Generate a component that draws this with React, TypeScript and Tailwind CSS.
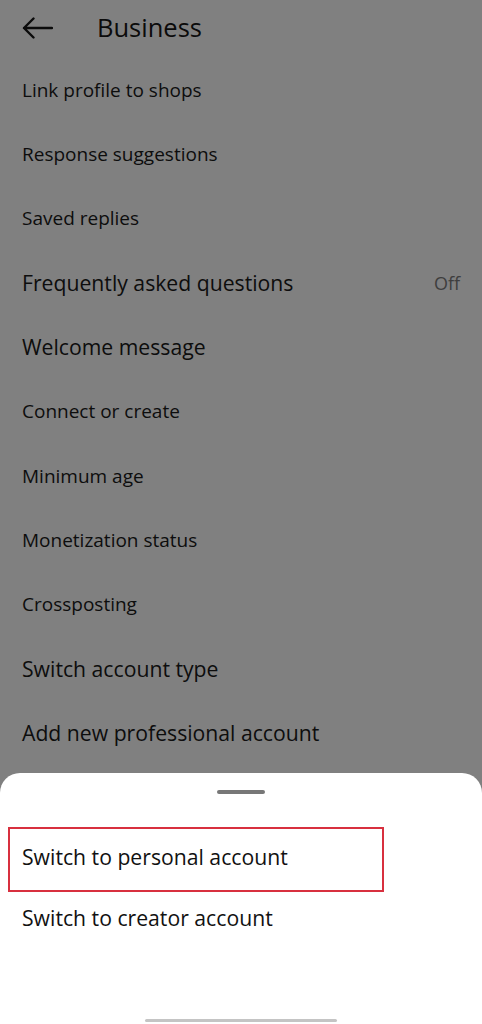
import React from "react";

const font = { fontFamily: '"Open Sans", "Noto Sans", sans-serif' };

type Row = { label: string; big?: boolean; right?: string };

const rows: Row[] = [
  { label: "Link profile to shops" },
  { label: "Response suggestions" },
  { label: "Saved replies" },
  { label: "Frequently asked questions", big: true, right: "Off" },
  { label: "Welcome message", big: true },
  { label: "Connect or create" },
  { label: "Minimum age" },
  { label: "Monetization status" },
  { label: "Crossposting" },
  { label: "Switch account type", big: true },
  { label: "Add new professional account", big: true },
];

export default function App() {
  return (
    <div className="relative w-[482px] h-[1024px] overflow-hidden bg-[#808080]" style={font}>
      <div className="flex items-center h-[56px] pl-[22px]">
        <svg width="31" height="22" viewBox="0 0 31 22" className="shrink-0">
          <path d="M30 11H2M11.5 1.5L2 11l9.5 9.5" fill="none" stroke="#0b0b0b" strokeWidth="2.4" strokeLinecap="round" strokeLinejoin="round" />
        </svg>
        <span className="ml-[44px] text-[25.5px] font-medium text-[#0b0b0b] leading-none">Business</span>
      </div>
      <div className="flex flex-col mt-[2px]">
        {rows.map((r) => (
          <div key={r.label} className="flex items-center justify-between h-[64.3px] pl-[22px] pr-[22px]">
            <span className={r.big ? "text-[21.2px] text-[#0d0d0d]" : "text-[19px] text-[#0d0d0d]"}>{r.label}</span>
            {r.right && <span className="text-[18px] text-[#3e3e3e]">{r.right}</span>}
          </div>
        ))}
      </div>

      <div className="absolute left-0 right-0 top-[773px] bottom-0 bg-white rounded-t-[20px] flex flex-col">
        <div className="flex justify-center pt-[17px]">
          <div className="w-[48px] h-[4px] rounded-full bg-[#777]" />
        </div>
        <div className="mt-[33px] mx-[8px] w-[376px] h-[65px] border-2 border-[#d8303f] flex items-center pl-[12px] pb-[6px]">
          <span className="text-[21.2px] text-[#111]">Switch to personal account</span>
        </div>
        <div className="h-[56px] flex items-center pl-[22px] -mt-[2px]">
          <span className="text-[21.2px] text-[#111]">Switch to creator account</span>
        </div>
        <div className="flex-1" />
        <div className="flex justify-center pb-[2px]">
          <div className="w-[192px] h-[3px] rounded-full bg-[#c4c4c4]" />
        </div>
      </div>
    </div>
  );
}
